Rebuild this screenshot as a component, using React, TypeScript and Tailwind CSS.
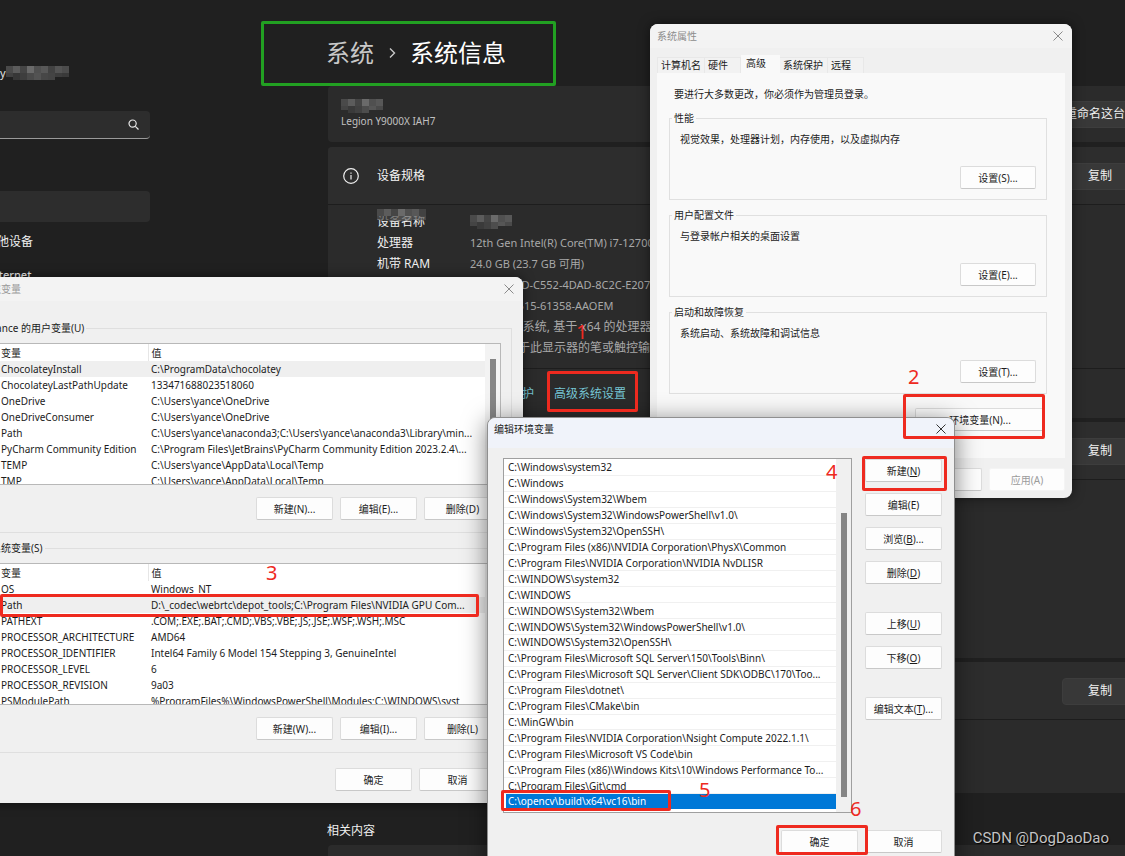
import React from "react";

type Variable = { name: string; value: string };

const userVariables: Variable[] = [
  { name: "ChocolateyInstall", value: "C:\\ProgramData\\chocolatey" },
  { name: "ChocolateyLastPathUpdate", value: "133471688023518060" },
  { name: "OneDrive", value: "C:\\Users\\yance\\OneDrive" },
  { name: "OneDriveConsumer", value: "C:\\Users\\yance\\OneDrive" },
  { name: "Path", value: "C:\\Users\\yance\\anaconda3;C:\\Users\\yance\\anaconda3\\Library\\min..." },
  { name: "PyCharm Community Edition", value: "C:\\Program Files\\JetBrains\\PyCharm Community Edition 2023.2.4\\..." },
  { name: "TEMP", value: "C:\\Users\\yance\\AppData\\Local\\Temp" },
  { name: "TMP", value: "C:\\Users\\yance\\AppData\\Local\\Temp" },
];

const systemVariables: Variable[] = [
  { name: "OS", value: "Windows_NT" },
  { name: "Path", value: "D:\\_codec\\webrtc\\depot_tools;C:\\Program Files\\NVIDIA GPU Com..." },
  { name: "PATHEXT", value: ".COM;.EXE;.BAT;.CMD;.VBS;.VBE;.JS;.JSE;.WSF;.WSH;.MSC" },
  { name: "PROCESSOR_ARCHITECTURE", value: "AMD64" },
  { name: "PROCESSOR_IDENTIFIER", value: "Intel64 Family 6 Model 154 Stepping 3, GenuineIntel" },
  { name: "PROCESSOR_LEVEL", value: "6" },
  { name: "PROCESSOR_REVISION", value: "9a03" },
  { name: "PSModulePath", value: "%ProgramFiles%\\WindowsPowerShell\\Modules;C:\\WINDOWS\\syst" },
];

const paths = [
  "C:\\Windows\\system32",
  "C:\\Windows",
  "C:\\Windows\\System32\\Wbem",
  "C:\\Windows\\System32\\WindowsPowerShell\\v1.0\\",
  "C:\\Windows\\System32\\OpenSSH\\",
  "C:\\Program Files (x86)\\NVIDIA Corporation\\PhysX\\Common",
  "C:\\Program Files\\NVIDIA Corporation\\NVIDIA NvDLISR",
  "C:\\WINDOWS\\system32",
  "C:\\WINDOWS",
  "C:\\WINDOWS\\System32\\Wbem",
  "C:\\WINDOWS\\System32\\WindowsPowerShell\\v1.0\\",
  "C:\\WINDOWS\\System32\\OpenSSH\\",
  "C:\\Program Files\\Microsoft SQL Server\\150\\Tools\\Binn\\",
  "C:\\Program Files\\Microsoft SQL Server\\Client SDK\\ODBC\\170\\Too...",
  "C:\\Program Files\\dotnet\\",
  "C:\\Program Files\\CMake\\bin",
  "C:\\MinGW\\bin",
  "C:\\Program Files\\NVIDIA Corporation\\Nsight Compute 2022.1.1\\",
  "C:\\Program Files\\Microsoft VS Code\\bin",
  "C:\\Program Files (x86)\\Windows Kits\\10\\Windows Performance To...",
  "C:\\Program Files\\Git\\cmd",
  "C:\\opencv\\build\\x64\\vc16\\bin",
];

function CloseButton({ className }: { className: string }) {
  return (
    <button type="button" aria-label="关闭" className={`flex size-5 items-center justify-center ${className}`}>
      <svg width="10" height="10" viewBox="0 0 10 10" fill="none" stroke="currentColor" strokeWidth="1">
        <path d="M0.5 0.5 9.5 9.5M9.5 0.5 0.5 9.5" />
      </svg>
    </button>
  );
}

function DialogButton({
  children,
  width = "w-[77px]",
  className = "",
}: {
  children: React.ReactNode;
  width?: string;
  className?: string;
}) {
  return (
    <button
      type="button"
      className={`h-[23px] shrink-0 rounded-[2px] border border-[#dcdcdc] border-b-[#c8c8c8] bg-[#fdfdfd] text-center leading-[14px] whitespace-nowrap ${width} ${className}`}
    >
      {children}
    </button>
  );
}

function VariableTable({ rows, selected, thumb }: { rows: Variable[]; selected: number; thumb: boolean }) {
  return (
    <div className="flex h-[142px] overflow-hidden border border-[#b8b8b8] bg-white">
      <div className="min-w-0 flex-1 overflow-hidden">
        <table className="w-full table-fixed border-collapse text-left">
          <colgroup>
            <col className="w-[151px]" />
            <col />
          </colgroup>
          <thead>
            <tr className="h-[17px]">
              <th className="border-r border-[#e6e6e6] p-0 pl-1 font-normal">变量</th>
              <th className="p-0 pl-[3px] font-normal">值</th>
            </tr>
          </thead>
          <tbody>
            {rows.map((row, index) => (
              <tr key={row.name} className={`h-4 whitespace-nowrap ${index === selected ? "bg-[#efefef]" : ""}`}>
                <td className="p-0 pl-1">{row.name}</td>
                <td className="p-0 pl-[3px]">{row.value}</td>
              </tr>
            ))}
          </tbody>
        </table>
      </div>
      <div className="flex w-[15px] shrink-0 justify-center bg-[#f3f3f3] pt-[15px]">
        {thumb && <div className="h-24 w-1.5 bg-[#858585]" />}
      </div>
    </div>
  );
}

function EnvironmentWindow() {
  return (
    <section className="absolute top-[277px] -left-[30px] w-[553px] rounded-lg bg-[#f0f0f0] pb-3 shadow-[0_0_12px_rgba(0,0,0,0.5)]">
      <header className="flex h-6 items-center justify-between rounded-t-lg bg-[#f3f3f3] pr-1 pl-[11px] text-[#9a9a9a]">
        <h2>环境变量</h2>
        <CloseButton className="text-[#8a8a8a]" />
      </header>
      <div className="mt-5 mr-[11px] ml-3.5 flex flex-col gap-2">
        <fieldset className="border border-[#dfdfdf] pr-2.5 pb-3 pl-[11px]">
          <legend className="-ml-[7px] px-0.5 leading-[14px]">yance 的用户变量(U)</legend>
          <div className="pt-2">
            <VariableTable rows={userVariables} selected={0} thumb />
          </div>
          <div className="mt-3 flex justify-end gap-[7px]">
            <DialogButton>新建(N)...</DialogButton>
            <DialogButton>编辑(E)...</DialogButton>
            <DialogButton>删除(D)</DialogButton>
          </div>
        </fieldset>
        <fieldset className="border border-[#dfdfdf] pr-2.5 pb-3 pl-[11px]">
          <legend className="-ml-[7px] px-0.5 leading-[14px]">系统变量(S)</legend>
          <div className="pt-2">
            <VariableTable rows={systemVariables} selected={1} thumb={false} />
          </div>
          <div className="mt-3 flex justify-end gap-[7px]">
            <DialogButton>新建(W)...</DialogButton>
            <DialogButton>编辑(I)...</DialogButton>
            <DialogButton>删除(L)</DialogButton>
          </div>
        </fieldset>
      </div>
      <footer className="mt-[15px] mr-[27px] flex justify-end gap-[7px]">
        <DialogButton>确定</DialogButton>
        <DialogButton>取消</DialogButton>
      </footer>
    </section>
  );
}

function SettingsGroup({ title, text, button }: { title: string; text: string; button: string }) {
  return (
    <fieldset className="border border-[#e0e0e0] px-2.5 pb-2.5">
      <legend className="-ml-2 px-0.5 leading-[14px]">{title}</legend>
      <p className="pt-[7px]">{text}</p>
      <div className="mt-5 flex justify-end">
        <DialogButton width="w-[76px]">{button}</DialogButton>
      </div>
    </fieldset>
  );
}

function PropertiesWindow() {
  const tab = "h-4 border-t border-r border-[#e8e8e8] bg-[#f2f2f2] pl-[3px] pb-px leading-[14px] text-left";
  return (
    <section className="absolute top-6 left-[650px] w-[422px] rounded-lg bg-[#f0f0f0] pb-[7px] shadow-[0_0_12px_rgba(0,0,0,0.5)]">
      <header className="flex h-6 items-center justify-between rounded-t-lg bg-[#f3f3f3] pr-1 pl-[7px] text-[#8c8c8c]">
        <h2>系统属性</h2>
        <CloseButton className="text-[#8a8a8a]" />
      </header>
      <div role="tablist" className="mx-[7px] flex h-[25px] items-end">
        <button type="button" role="tab" className={`w-12 border-l ${tab}`}>计算机名</button>
        <button type="button" role="tab" className={`w-9 ${tab}`}>硬件</button>
        <button type="button" role="tab" aria-selected="true" className="h-[18px] w-[39px] bg-[#f9f9f9] pb-0.5 pl-[5px] text-left leading-[14px]">
          高级
        </button>
        <button type="button" role="tab" className={`w-12 ${tab}`}>系统保护</button>
        <button type="button" role="tab" className={`w-9 ${tab}`}>远程</button>
      </div>
      <div className="mx-[7px] bg-[#f9f9f9] pt-3.5 pr-[18px] pb-[27px] pl-3">
        <p className="ml-[5px]">要进行大多数更改，你必须作为管理员登录。</p>
        <div className="mt-2.5 flex flex-col gap-2">
          <SettingsGroup title="性能" text="视觉效果，处理器计划，内存使用，以及虚拟内存" button="设置(S)..." />
          <SettingsGroup title="用户配置文件" text="与登录帐户相关的桌面设置" button="设置(E)..." />
          <SettingsGroup title="启动和故障恢复" text="系统启动、系统故障和调试信息" button="设置(T)..." />
        </div>
        <div className="mt-3.5 flex justify-end pr-0.5">
          <DialogButton width="w-[130px]">环境变量(N)...</DialogButton>
        </div>
      </div>
      <footer className="mx-[7px] mt-2.5 flex justify-end gap-[7px]">
        <DialogButton width="w-[76px]">确定</DialogButton>
        <DialogButton width="w-[76px]">取消</DialogButton>
        <DialogButton width="w-[76px]" className="border-[#f4f4f4] border-b-[#f4f4f4] bg-[#f7f7f7] text-[#9b9b9b]">
          应用(A)
        </DialogButton>
      </footer>
    </section>
  );
}

function EditWindow() {
  return (
    <section className="absolute top-[417px] -bottom-5 left-[487px] w-[468px] rounded-lg border border-[#8f8f8f] bg-[#f0f0f0] shadow-[0_4px_24px_rgba(0,0,0,0.5)]">
      <header className="flex h-[30px] items-center justify-between rounded-t-lg bg-[#f0f3fa] pr-[3px] pb-2 pl-1.5">
        <h2>编辑环境变量</h2>
        <CloseButton className="text-[#333333]" />
      </header>
      <div className="mt-2.5 flex gap-[13px] pr-3 pl-[15px]">
        <div className="flex h-[355px] min-w-0 flex-1 border border-[#9f9f9f] bg-white">
          <ul role="listbox" aria-label="路径" className="flex min-w-0 flex-1 flex-col pt-px pb-[3px]">
            {paths.map((path, index) => {
              const active = index === paths.length - 1;
              return (
                <li
                  key={index}
                  role="option"
                  aria-selected={active}
                  className={`flex min-h-0 flex-1 items-center whitespace-nowrap ${
                    active ? "ml-0.5 bg-[#0078d7] pl-0.5 text-white" : "border-b border-[#f0f0f0] pl-1"
                  }`}
                >
                  {path}
                </li>
              );
            })}
          </ul>
          <div className="flex w-[15px] shrink-0 justify-center bg-[#f0f0f0] pt-[54px] pb-[15px]">
            <div className="w-1.5 bg-[#858585]" />
          </div>
        </div>
        <div className="flex w-[77px] shrink-0 flex-col gap-[11px] pt-px">
          <DialogButton>新建(<u>N</u>)</DialogButton>
          <DialogButton>编辑(E)</DialogButton>
          <DialogButton>浏览(<u>B</u>)...</DialogButton>
          <DialogButton>删除(<u>D</u>)</DialogButton>
          <DialogButton className="mt-[17px]">上移(<u>U</u>)</DialogButton>
          <DialogButton>下移(<u>O</u>)</DialogButton>
          <DialogButton className="mt-[17px]">编辑文本(<u>T</u>)...</DialogButton>
        </div>
      </div>
      <footer className="mt-[17px] flex justify-end gap-[7px] pr-3">
        <DialogButton>确定</DialogButton>
        <DialogButton>取消</DialogButton>
      </footer>
    </section>
  );
}

function Mosaic({ width, className = "" }: { width: number; className?: string }) {
  const shades = ["#4a4a4a", "#5c5c5c", "#454545", "#6a6a6a", "#505050", "#585858", "#424242", "#545454", "#4c4c4c"];
  const columns = Math.floor(width / 7);
  return (
    <svg width={width} height="14" className={className} aria-hidden="true">
      {Array.from({ length: columns }, (_, i) => (
        <g key={i}>
          <rect x={i * 7} y="0" width="7" height="7" fill={shades[i % 9]} />
          <rect x={i * 7} y="7" width="7" height={i === 0 || i > columns - 3 ? 4 : 7} fill={shades[(i * 2 + 4) % 9]} opacity="0.7" />
        </g>
      ))}
    </svg>
  );
}

function CopyHeader({ title, icon }: { title: string; icon?: boolean }) {
  return (
    <div className="flex h-[58px] items-center border-b border-[#1d1d1d] bg-[#2d2d2d] pt-px pr-[35px] pl-[15px]">
      {icon && (
        <svg width="16" height="16" viewBox="0 0 16 16" fill="none" stroke="#f0f0f0" strokeWidth="1.2" className="mr-[18px]">
          <circle cx="8" cy="8" r="7.3" />
          <path d="M8 7v4.4M8 4.4v1.3" />
        </svg>
      )}
      <h2 className="text-xs text-[#f5f5f5]">{title}</h2>
      <button type="button" className="ml-auto h-[27px] w-[76px] rounded border border-[#3d3d3d] bg-[#383838] text-xs text-[#f0f0f0]">
        复制
      </button>
    </div>
  );
}

function Spec({ label, children }: { label: React.ReactNode; children: React.ReactNode }) {
  return (
    <div className="flex h-[21px] items-center whitespace-nowrap">
      <dt className="w-[93px] text-xs text-[#f0f0f0]">{label}</dt>
      <dd className="text-[#a8a8a8]">{children}</dd>
    </div>
  );
}

function SettingsPage() {
  return (
    <div className="flex min-h-screen bg-[#202020] text-[11px] text-[#e4e4e4]">
      <aside className="w-[150px] shrink-0 pt-[66px]">
        <div className="flex h-3.5 items-center">
          y<Mosaic width={63} />
        </div>
        <label className="mt-[31px] flex h-7 items-center rounded-r border-b border-[#9a9a9a] bg-[#2d2d2d] pr-[11px]">
          <input aria-label="查找设置" className="min-w-0 flex-1 bg-transparent outline-none" />
          <svg width="11" height="11" viewBox="0 0 11 11" fill="none" stroke="#e8e8e8" strokeWidth="1.2">
            <circle cx="4.6" cy="4.6" r="3.6" />
            <path d="m7.3 7.3 3.2 3.2" />
          </svg>
        </label>
        <nav className="mt-[52px]">
          <div className="h-[31px] rounded-r bg-[#2d2d2d]" />
          <a href="#devices" className="mt-3 -ml-[15px] block text-xs leading-4 text-[#f0f0f0]">其他设备</a>
          <a href="#network" className="mt-[17px] -ml-3 block leading-4 font-medium text-[#f0f0f0]">Internet</a>
        </nav>
      </aside>
      <main className="-mr-12 ml-[178px] min-w-0 flex-1 pt-[34px]">
        <h1 className="-ml-0.5 flex h-[38px] items-center text-2xl text-white">
          <a href="#system" className="text-[#c8c8c8]">系统</a>
          <svg width="36" height="12" viewBox="0 0 36 12" fill="none" stroke="#c8c8c8" strokeWidth="1.4">
            <path d="m16 1.5 4.5 4.5-4.5 4.5" />
          </svg>
          系统信息
        </h1>
        <section className="mt-3.5 flex h-[56px] items-center rounded bg-[#2b2b2b] px-[13px]">
          <div>
            <Mosaic width={42} className="block" />
            <p className="text-[10px] leading-4 text-[#c0c0c0]">Legion Y9000X IAH7</p>
          </div>
          <button type="button" className="ml-auto h-[27px] rounded border border-[#3d3d3d] bg-[#383838] px-2.5 text-xs text-[#f0f0f0]">
            重命名这台电脑
          </button>
        </section>
        <section className="mt-[5px] overflow-hidden rounded bg-[#2b2b2b]">
          <CopyHeader title="设备规格" icon />
          <dl className="h-[163px] pt-1.5 pl-[49px]">
            <Spec
              label={
                <span className="relative">
                  设备名称
                  <Mosaic width={49} className="absolute -top-1 left-0 h-3" />
                </span>
              }
            >
              <Mosaic width={42} className="block" />
            </Spec>
            <Spec label="处理器">12th Gen Intel(R) Core(TM) i7-12700H</Spec>
            <Spec label="机带 RAM">24.0 GB (23.7 GB 可用)</Spec>
            <Spec label="设备 ID">DD0DAD4D-C552-4DAD-8C2C-E207</Spec>
            <Spec label="产品 ID">00342-35515-61358-AAOEM</Spec>
            <Spec label="系统类型"><span className="text-xs">64 位操作系统, 基于 x64 的处理器</span></Spec>
            <Spec label="笔和触控"><span className="text-xs">没有可用于此显示器的笔或触控输入</span></Spec>
          </dl>
          <div className="flex h-[50px] items-center justify-start gap-5 border-t border-[#1d1d1d] pl-[78px] text-xs text-[#76c5d4]">
            <a href="#domain">域或工作组</a>
            <a href="#protection">系统保护</a>
            <a href="#advanced">高级系统设置</a>
          </div>
        </section>
        <section className="mt-1 h-[236px] overflow-hidden rounded bg-[#2b2b2b]">
          <CopyHeader title="Windows 规格" />
        </section>
        <section className="mt-1 h-[131px] overflow-hidden rounded bg-[#2b2b2b]">
          <CopyHeader title="支持" />
        </section>
        <h2 className="mt-[30px] -ml-px text-xs leading-4 text-[#f0f0f0]">相关内容</h2>
        <section className="mt-1.5 h-[11px] rounded-t bg-[#2b2b2b]" />
      </main>
    </div>
  );
}

export default function App() {
  const box = "pointer-events-none absolute rounded-[2px] border-3 border-[#ee2a1f]";
  const step = "pointer-events-none absolute text-[20px] leading-5 text-[#ee2a1f]";
  return (
    <div className="relative min-h-screen overflow-hidden bg-[#202020] font-['Noto_Sans','Noto_Sans_CJK_SC',sans-serif] text-[10px] leading-[14px] text-[#1c1c1c]">
      <SettingsPage />
      <span className={`${step} top-[322px] left-[576px]`}>1</span>
      <PropertiesWindow />
      <EnvironmentWindow />
      <EditWindow />

      <div className="pointer-events-none absolute top-[21px] left-[261px] h-[65px] w-[295px] rounded-[2px] border-3 border-[#22a022]" />
      <div className={`${box} top-[371px] left-[547px] h-[41px] w-[91px]`} />
      <div className={`${box} top-[394px] left-[903px] h-[45px] w-[142px]`} />
      <div className={`${box} top-[594px] left-0 h-[23px] w-[479px]`} />
      <div className={`${box} top-[456px] left-[862px] h-[35px] w-[85px]`} />
      <div className={`${box} top-[790px] left-[501px] h-[21px] w-[170px]`} />
      <div className={`${box} top-[825px] left-[776px] h-[30px] w-[92px]`} />
      <span className={`${step} top-[367px] left-[908px]`}>2</span>
      <span className={`${step} top-[563px] left-[266px]`}>3</span>
      <span className={`${step} top-[462px] left-[826px]`}>4</span>
      <span className={`${step} top-[780px] left-[699px]`}>5</span>
      <span className={`${step} top-[799px] left-[850px]`}>6</span>
      <span className="absolute right-4 bottom-2 font-['Roboto',sans-serif] text-[15px] leading-5 text-[#c4c4c4] [text-shadow:1px_1px_1px_#000]">
        CSDN @DogDaoDao
      </span>
    </div>
  );
}
